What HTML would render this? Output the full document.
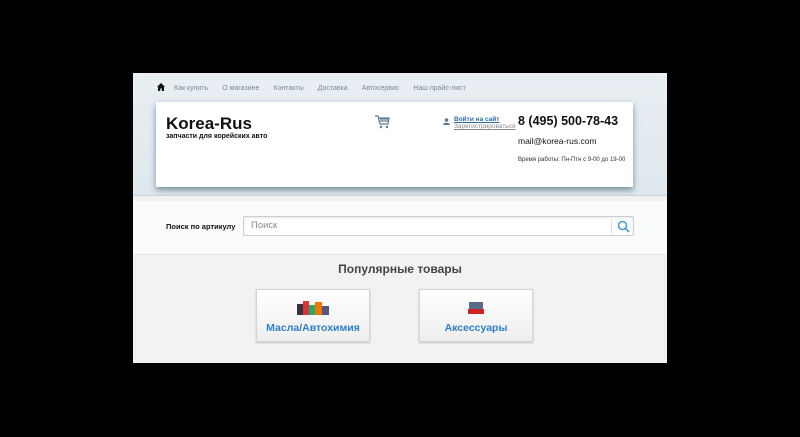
<!DOCTYPE html>
<html><head><meta charset="utf-8"><style>
*{margin:0;padding:0;box-sizing:border-box}
body{width:800px;height:437px;background:#000;font-family:"Liberation Sans",sans-serif;position:relative;overflow:hidden}
#w{position:absolute;left:133px;top:73px;width:534px;height:290px;background:#f2f2f2;overflow:hidden}
#hd{position:absolute;left:0;top:0;width:534px;height:123px;background:linear-gradient(#e9eff3,#dfe8ee);border-bottom:1px solid #c9d3d9}
#nav{position:absolute;top:10px;left:24px;font-size:7px;color:#7a8a96;white-space:nowrap}
#nav span{margin-right:14px}
#card{position:absolute;left:23px;top:29px;width:477px;height:85px;background:#fff;box-shadow:0 3px 6px rgba(60,90,110,.65)}
#sb{position:absolute;left:0;top:128px;width:534px;height:54px;background:#fafbfc;border-bottom:1px solid #e2e6e8}
.btn{position:absolute;top:216px;width:114px;height:53px;background:linear-gradient(#fff,#eee);border:1px solid #d4d4d4;box-shadow:0 1px 2px rgba(0,0,0,.2);text-align:center;color:#2f7fc8;font-weight:bold;font-size:10.5px}
</style></head><body>
<div id="w">
 <div id="hd">
  <div id="nav"><svg style="vertical-align:-1px;margin-right:9px" width="8" height="8" viewBox="0 0 8 8"><path d="M4 0L0 4h1v4h2.2V5.5h1.6V8H7V4h1z" fill="#111"/></svg><span>Как купить</span><span>О магазине</span><span>Контакты</span><span>Доставка</span><span>Автосервис</span><span>Наш прайс-лист</span></div>
  <div id="card">
   <div style="position:absolute;left:10px;top:12px;font-size:17px;font-weight:bold;color:#111">Korea-Rus</div>
   <div style="position:absolute;left:10px;top:31px;font-size:7px;font-weight:bold;color:#111">запчасти для корейских авто</div>
   <svg style="position:absolute;left:218px;top:13px" width="16" height="14" viewBox="0 0 16 14"><path d="M1 1h3l2 8h8l1-6H5M6 4h9M6 6h8" stroke="#5a7d96" stroke-width="1.2" fill="none"/><circle cx="7" cy="12" r="1.2" fill="#5a7d96"/><circle cx="13" cy="12" r="1.2" fill="#5a7d96"/></svg>
   <svg style="position:absolute;left:287px;top:16px" width="7" height="7" viewBox="0 0 7 7"><circle cx="3.5" cy="2" r="1.8" fill="#557a94"/><path d="M0 7c0-3 7-3 7 0z" fill="#557a94"/></svg>
   <div style="position:absolute;left:298px;top:14px;font-size:6.5px;color:#2f6fa8;text-decoration:underline;font-weight:bold">Войти на сайт</div>
   <div style="position:absolute;left:298px;top:21px;font-size:6.5px;color:#888;text-decoration:underline">Зарегистрироваться</div>
   <div style="position:absolute;left:362px;top:12px;font-size:12.5px;font-weight:bold;color:#111">8 (495) 500-78-43</div>
   <div style="position:absolute;left:362px;top:34px;font-size:8.5px;color:#111">mail@korea-rus.com</div>
   <div style="position:absolute;left:362px;top:55px;font-size:6px;color:#333">Время работы: Пн-Птн с 9-00 до 19-00</div>
  </div>
 </div>
 <div id="sb">
  <div style="position:absolute;left:33px;top:21px;font-size:7.5px;font-weight:bold;color:#111">Поиск по артикулу</div>
  <div style="position:absolute;left:110px;top:15px;width:391px;height:20px;background:#fff;border:1px solid #c8d0d5;border-radius:2px;box-shadow:inset 0 1px 2px rgba(0,0,0,.1)">
   <div style="position:absolute;left:7px;top:3px;font-size:9.5px;color:#888">Поиск</div>
   <div style="position:absolute;right:0;top:2px;width:22px;height:15px;border-left:1px solid #dde">
    <svg style="position:absolute;left:5px;top:1px" width="13" height="13" viewBox="0 0 13 13"><circle cx="5.5" cy="5.5" r="4" stroke="#4a9fd0" stroke-width="1.6" fill="none"/><path d="M8.5 8.5l3.5 3.5" stroke="#4a9fd0" stroke-width="1.8"/></svg>
   </div>
  </div>
 </div>
 <div style="position:absolute;left:0;width:534px;top:189px;text-align:center;font-size:12px;font-weight:bold;color:#444">Популярные товары</div>
 <div class="btn" style="left:123px">
  <svg style="margin-top:8px" width="36" height="18" viewBox="0 0 36 18"><rect x="2" y="6" width="6" height="11" fill="#334"/><rect x="8" y="3" width="6" height="14" fill="#d33"/><rect x="14" y="7" width="6" height="10" fill="#2a6"/><rect x="20" y="4" width="7" height="13" fill="#e70"/><rect x="27" y="8" width="7" height="9" fill="#558"/></svg>
  <div style="margin-top:3px">Масла/Автохимия</div>
 </div>
 <div class="btn" style="left:286px">
  <svg style="margin-top:8px" width="20" height="18" viewBox="0 0 20 18"><rect x="3" y="4" width="14" height="9" fill="#5a6a88"/><rect x="2" y="11" width="16" height="5" fill="#c22"/></svg>
  <div style="margin-top:3px">Аксессуары</div>
 </div>
</div>
</body></html>
